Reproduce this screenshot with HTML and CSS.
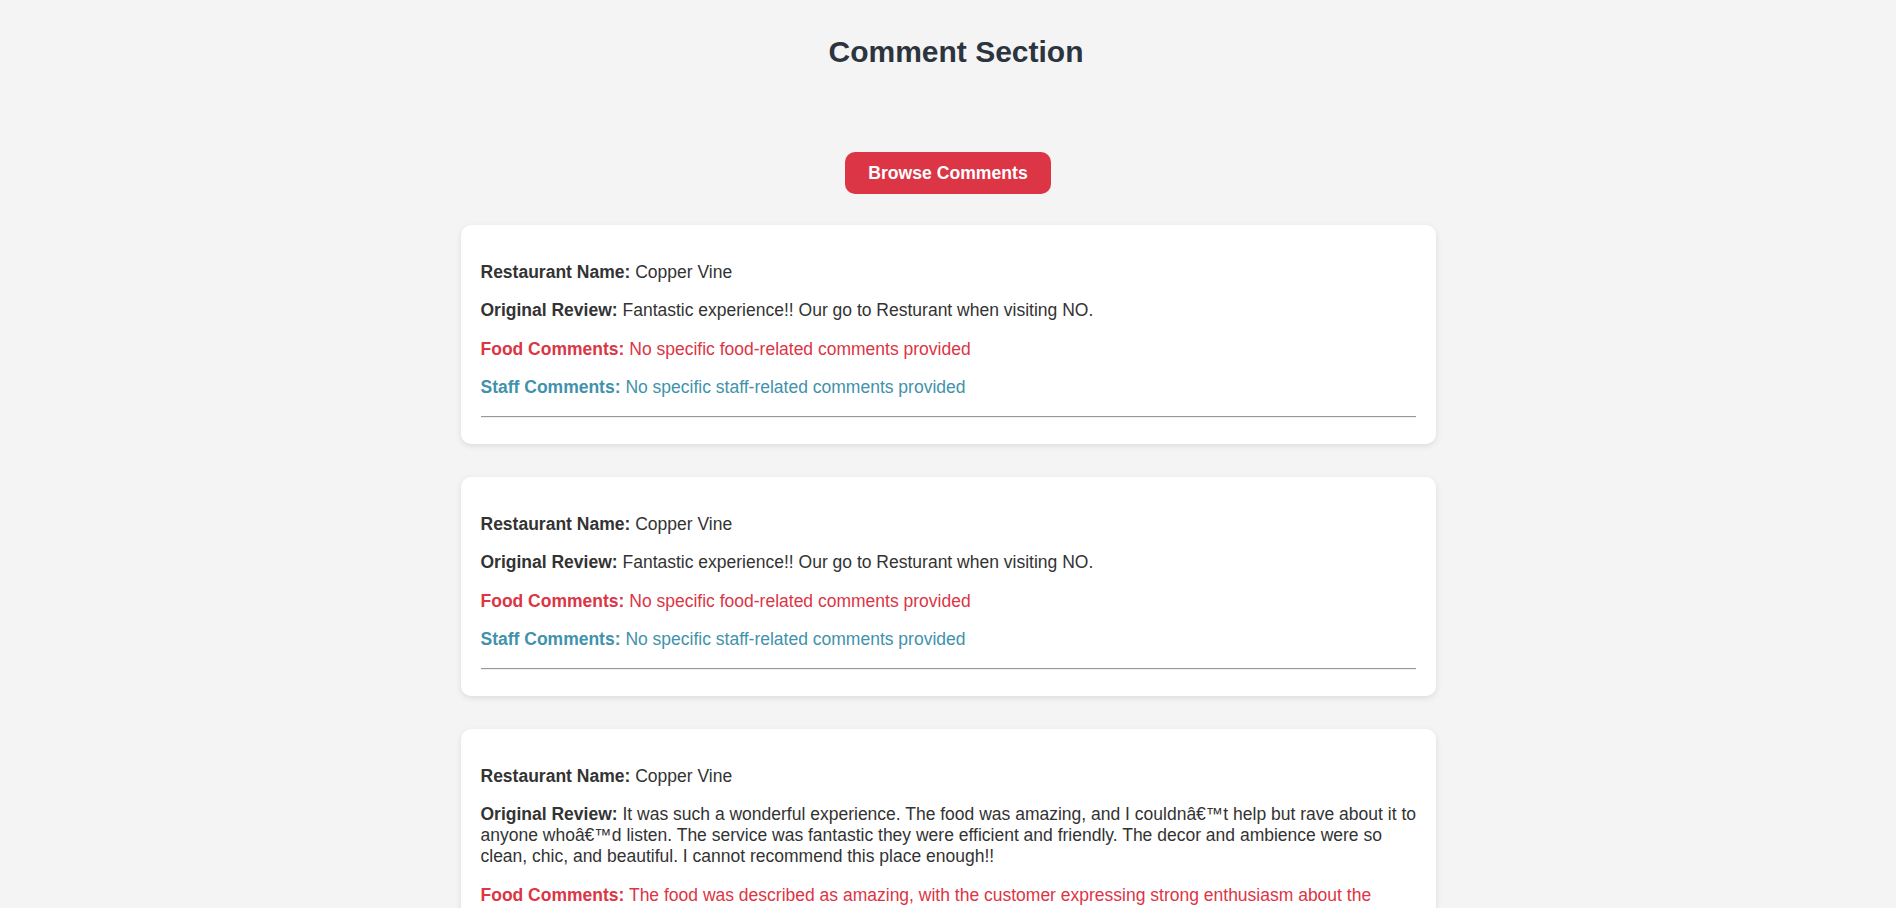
FILE: index.html
```html
<!DOCTYPE html>
<html lang="en">
<head>
<meta charset="utf-8">
<title>Comment Section</title>
<link rel="stylesheet" href="styles.css">
</head>
<body>
<header class="page-header">
  <h1 class="title">Comment Section</h1>
</header>
<main class="main">
  <button class="browse-btn" type="button">Browse Comments</button>
  <section class="comments">
    <article class="card">
      <p class="row"><strong>Restaurant Name:</strong> Copper Vine</p>
      <p class="row"><strong>Original Review:</strong> Fantastic experience!! Our go to Resturant when visiting NO.</p>
      <p class="row food"><strong>Food Comments:</strong> No specific food-related comments provided</p>
      <p class="row staff"><strong>Staff Comments:</strong> No specific staff-related comments provided</p>
      <hr class="divider">
    </article>
    <article class="card">
      <p class="row"><strong>Restaurant Name:</strong> Copper Vine</p>
      <p class="row"><strong>Original Review:</strong> Fantastic experience!! Our go to Resturant when visiting NO.</p>
      <p class="row food"><strong>Food Comments:</strong> No specific food-related comments provided</p>
      <p class="row staff"><strong>Staff Comments:</strong> No specific staff-related comments provided</p>
      <hr class="divider">
    </article>
    <article class="card">
      <p class="row"><strong>Restaurant Name:</strong> Copper Vine</p>
      <p class="row"><strong>Original Review:</strong> It was such a wonderful experience. The food was amazing, and I couldnâ€™t help but rave about it to anyone whoâ€™d listen. The service was fantastic they were efficient and friendly. The decor and ambience were so clean, chic, and beautiful. I cannot recommend this place enough!!</p>
      <p class="row food"><strong>Food Comments:</strong> The food was described as amazing, with the customer expressing strong enthusiasm about the quality of the dishes.</p>
      <p class="row staff"><strong>Staff Comments:</strong> The service was described as fantastic, with the staff being efficient and friendly.</p>
      <hr class="divider">
    </article>
  </section>
</main>
</body>
</html>
```

FILE: styles.css
```css
html, body {
  margin: 0;
  padding: 0;
}

body {
  background: #f4f4f4;
  font-family: "Liberation Sans", Arial, Helvetica, sans-serif;
  color: #333333;
}

.page-header {
  display: flex;
  justify-content: center;
  padding: 35px 0 0 16px;
}

.title {
  margin: 0;
  font-size: 30px;
  font-weight: bold;
  color: #2c3440;
}

.main {
  display: flex;
  flex-direction: column;
  align-items: center;
  padding-top: 83px;
}

.browse-btn {
  font-family: "Liberation Sans", Arial, Helvetica, sans-serif;
  font-size: 17.6px;
  font-weight: bold;
  line-height: 20px;
  color: #ffffff;
  background: #dc3545;
  border: none;
  border-radius: 10px;
  padding: 11px 23px;
  cursor: pointer;
}

.comments {
  display: flex;
  flex-direction: column;
  gap: 33px;
  margin-top: 31px;
}

.card {
  width: 939px;
  padding: 19px 16px 21px 20px;
  background: #ffffff;
  border-radius: 10px;
  box-shadow: 0 2px 6px rgba(0, 0, 0, 0.1);
}

.row {
  font-size: 17.5px;
  margin: 17.5px 0;
}

.food {
  color: #dc3545;
}

.staff {
  color: #4192ac;
}

.divider {
  margin: 17.5px 4px 5.5px 0;
  border: none;
  border-top: 1px solid #9a9a9a;
  border-bottom: 1px solid #eeeeee;
  height: 0;
}
```
